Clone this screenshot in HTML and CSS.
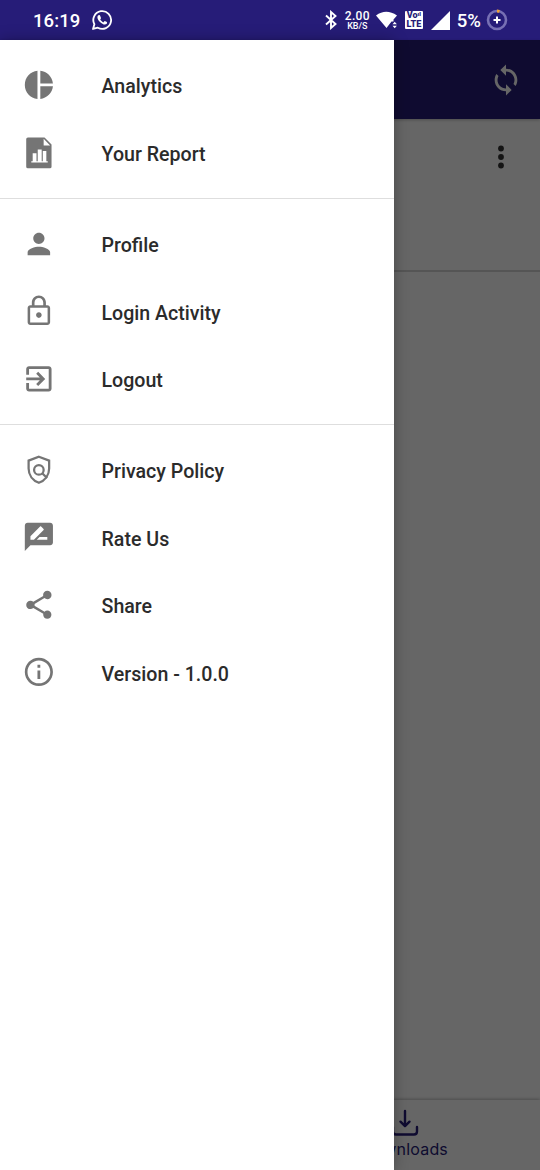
FILE: index.html
```html
<!DOCTYPE html>
<html lang="en">
<head>
<meta charset="utf-8">
<title>Menu</title>
<link rel="stylesheet" href="styles.css">
</head>
<body>
<header class="status">
  <span class="clock">16:19</span>
  <svg class="wa" viewBox="0 0 24 24" width="22" height="22"><path d="M2.200 21.800l1.500-5.200A9.700 9.700 0 1 1 7.400 20.400z" fill="none" stroke="#fff" stroke-width="2" stroke-linejoin="round"/><path d="M8.700 6.600c-.4 0-1.700.8-1.700 2.400 0 3.300 4.900 8 8.100 8 1.500 0 2.500-1 2.500-2.200 0-.5-2.300-1.600-2.700-1.600-.4 0-1 1.400-1.400 1.400-.7 0-3.500-2.400-3.500-3.300 0-.4.900-.8.900-1.300 0-.5-.9-2.900-1.300-3.200-.2-.2-.6-.2-.9-.2z" fill="#fff"/></svg>
  <div class="status-right">
    <svg class="bt" viewBox="0 0 14 20" width="14" height="20"><path d="M2 5.500l9.500 8.500L7 18V2l4.500 4L2 14.500" fill="none" stroke="#fff" stroke-width="1.900"/></svg>
    <div class="speed"><b>2.00</b><span>KB/S</span></div>
    <svg class="wifi" viewBox="0 0 22 18" width="22" height="18"><path d="M0 4.500Q10 -3 21 4.500L17.500 8.500V10.500H15.500L10.500 17z" fill="#fff"/><path d="M16.500 13.200l2.200-2.500 2.200 2.500zM16.500 14.700h4.400l-2.200 2.500z" fill="#fff"/></svg>
    <div class="volte"><span>Vo<i>ıl</i></span><span>LTE</span></div>
    <svg class="signal" viewBox="0 0 19 19" width="19" height="19"><path d="M19 0v19H0z" fill="#fff"/></svg>
    <span class="percent">5%</span>
    <svg class="battery" viewBox="0 0 22 22" width="22" height="22"><circle cx="11" cy="11" r="9" fill="none" stroke="#7770b4" stroke-width="2.600"/><path d="M11 2a9 9 0 0 1 2.500.4" fill="none" stroke="#f2a33a" stroke-width="2.800"/><path d="M11 7.500v7M7.500 11h7" stroke="#fff" stroke-width="2"/></svg>
  </div>
</header>
<main class="stage">
  <section class="app">
    <div class="appbar">
      <svg viewBox="0 0 24 24" width="34" height="34" fill="#fff"><path d="M12 4V1L8 5l4 4V6c3.310 0 6 2.690 6 6 0 1.010-.25 1.970-.7 2.800l1.460 1.460C19.540 15.030 20 13.570 20 12c0-4.420-3.580-8-8-8zm0 14c-3.310 0-6-2.690-6-6 0-1.010.25-1.970.7-2.800L5.240 7.740C4.460 8.970 4 10.430 4 12c0 4.420 3.580 8 8 8v3l4-4-4-4v3z"/></svg>
    </div>
    <div class="card">
      <svg viewBox="0 0 8 24" width="8" height="24" fill="#333"><circle cx="4" cy="3.500" r="2.900"/><circle cx="4" cy="12" r="2.900"/><circle cx="4" cy="20.500" r="2.900"/></svg>
    </div>
    <div class="blank"></div>
    <nav class="tabs">
      <div class="tab">
        <svg viewBox="0 0 28 28" width="28" height="28" fill="none" stroke="#261c78" stroke-width="2.400" stroke-linecap="round" stroke-linejoin="round"><path d="M14 2v15M9.500 12.700l4.500 4.500 4.500-4.500M2 18v4.500q0 3 3 3h18q3 0 3-3V18"/></svg>
        <span>Downloads</span>
      </div>
    </nav>
  </section>
  <div class="scrim"></div>
  <aside class="drawer">
    <ul class="group">
      <li class="item"><svg class="icon" viewBox="0 0 24 24"><path d="M11 2v20c-5.070-.5-9-4.790-9-10s3.930-9.500 9-10zm2.030 0v8.990H22c-.47-4.740-4.240-8.520-8.970-8.990zm0 11.010V22c4.740-.47 8.500-4.250 8.970-8.990h-8.970z"/></svg>Analytics</li>
      <li class="item"><svg class="icon" viewBox="0 0 24 24"><path d="M4.200 1h11.800L21 6v15.800a1.200 1.200 0 0 1-1.200 1.200H4.200A1.200 1.200 0 0 1 3 21.800V2.200A1.200 1.200 0 0 1 4.200 1z"/><path class="cut" d="M15.400 2v4.800H20zM6.600 18.900V18h1v-5.800h2.700V18h.9V9.600h2.800V18h.8v-7.300h2.500V18h1v.9z"/></svg>Your Report</li>
    </ul>
    <ul class="group">
      <li class="item"><svg class="icon" viewBox="0 0 24 24"><path d="M12 12c2.210 0 4-1.790 4-4s-1.790-4-4-4-4 1.790-4 4 1.790 4 4 4zm0 2c-2.670 0-8 1.340-8 4v2h16v-2c0-2.660-5.330-4-8-4z"/></svg>Profile</li>
      <li class="item"><svg class="icon" viewBox="0 0 24 24"><path d="M12 17c1.100 0 2-.9 2-2s-.9-2-2-2-2 .9-2 2 .9 2 2 2zm6-9h-1V6c0-2.760-2.240-5-5-5S7 3.240 7 6v2H6c-1.100 0-2 .9-2 2v10c0 1.100.9 2 2 2h12c1.100 0 2-.9 2-2V10c0-1.100-.9-2-2-2zM8.900 6c0-1.710 1.390-3.100 3.100-3.100s3.100 1.390 3.100 3.100v2H8.900V6zM18.200 20.200H5.800V9.800h12.400v10.400z"/></svg>Login Activity</li>
      <li class="item"><svg class="icon" viewBox="0 0 24 24"><path d="M10.090 15.590L11.500 17l5-5-5-5-1.410 1.410L12.670 11H3v2h9.670l-2.580 2.590zM19 3H5c-1.110 0-2 .9-2 2v4h2V5h14v14H5v-4H3v4c0 1.100.89 2 2 2h14c1.100 0 2-.9 2-2V5c0-1.100-.9-2-2-2z"/></svg>Logout</li>
    </ul>
    <ul class="group">
      <li class="item"><svg class="icon line" viewBox="0 0 24 24"><path d="M12 2.700l7.300 2.700v5.700c0 4.600-2.900 8.500-7.300 10.100-4.400-1.600-7.300-5.500-7.300-10.100V5.400z"/><circle cx="12" cy="12" r="3.400"/><path d="M14.400 14.400l3.400 3.400"/></svg>Privacy Policy</li>
      <li class="item"><svg class="icon" viewBox="0 0 24 24"><path d="M20 2H4c-1.100 0-1.990.9-1.990 2L2 22l4-4h14c1.100 0 2-.9 2-2V4c0-1.100-.9-2-2-2zM6 14v-2.470l6.880-6.880c.2-.2.510-.2.710 0l1.770 1.770c.2.200.2.510 0 .710L8.470 14H6zm12 0h-7.500l2-2H18v2z"/></svg>Rate Us</li>
      <li class="item"><svg class="icon" viewBox="0 0 24 24"><path d="M18 16.080c-.76 0-1.440.3-1.960.770L8.910 12.700c.05-.23.090-.46.090-.7s-.04-.47-.09-.7l7.050-4.110c.54.500 1.250.810 2.040.810 1.660 0 3-1.340 3-3s-1.340-3-3-3-3 1.340-3 3c0 .240.040.470.090.700L8.040 9.810C7.500 9.310 6.790 9 6 9c-1.660 0-3 1.340-3 3s1.340 3 3 3c.79 0 1.500-.31 2.040-.81l7.120 4.160c-.05.210-.08.430-.08.650 0 1.610 1.310 2.920 2.920 2.920 1.610 0 2.920-1.310 2.920-2.920s-1.310-2.920-2.920-2.920z"/></svg>Share</li>
      <li class="item"><svg class="icon" viewBox="0 0 24 24"><path d="M11 17h2v-6h-2v6zm1-15C6.480 2 2 6.480 2 12s4.480 10 10 10 10-4.480 10-10S17.520 2 12 2zm0 18.100c-4.470 0-8.100-3.630-8.100-8.100S7.530 3.900 12 3.900s8.100 3.630 8.100 8.100-3.630 8.100-8.100 8.100zM11 9h2V7h-2v2z"/></svg>Version - 1.0.0</li>
    </ul>
  </aside>
</main>
</body>
</html>
```
FILE: styles.css
```css
* { box-sizing: border-box; }

body {
  margin: 0;
  height: 1170px;
  display: flex;
  flex-direction: column;
  overflow: hidden;
  font-family: Roboto, "Liberation Sans", sans-serif;
  background: #fff;
}

.status {
  height: 40px;
  flex: none;
  display: flex;
  align-items: center;
  padding: 0 32px 0 33px;
  background: #261c78;
  color: #fff;
  font-weight: 500;
}

.clock { font-size: 18.5px; letter-spacing: 0.1px; padding-top: 1px; }
.wa { margin-left: 11px; }
.status-right { margin-left: auto; display: flex; align-items: center; }
.bt { margin-right: 7px; }

.speed {
  width: 25px;
  display: flex;
  flex-direction: column;
  align-items: center;
  font-size: 9px;
  line-height: 8px;
  margin-right: 6px;
}
.speed b { font-size: 12px; line-height: 11px; font-weight: 500; letter-spacing: 0.3px; }

.wifi { margin-right: 7px; }

.volte {
  width: 18px;
  height: 18px;
  border-radius: 1px;
  background: #fff;
  color: #261c78;
  display: flex;
  flex-direction: column;
  align-items: center;
  font-size: 9px;
  line-height: 9px;
  font-weight: 900;
  margin-right: 8px;
}
.volte i { font-size: 6px; font-style: normal; vertical-align: 2px; line-height: 0; }

.signal { margin-right: 7px; }
.percent { font-size: 18.5px; margin-right: 5px; padding-top: 1px; }

.stage { flex: 1; position: relative; display: flex; }
.app { flex: 1; display: flex; flex-direction: column; }

.appbar {
  height: 79px;
  display: flex;
  align-items: center;
  justify-content: flex-end;
  padding-right: 17px;
  background: #261c78;
  box-shadow: 0 1px 3px rgba(0, 0, 0, 0.25);
}

.card {
  height: 153px;
  display: flex;
  justify-content: flex-end;
  align-items: flex-start;
  padding: 26px 35.5px 0 0;
  border-bottom: 2px solid #d4d4d4;
}

.blank { flex: 1; }

.tabs {
  height: 70px;
  display: flex;
  justify-content: center;
  padding-left: 270px;
  box-shadow: 0 -1px 3px rgba(0, 0, 0, 0.25);
}
.tab {
  width: 270px;
  display: flex;
  flex-direction: column;
  align-items: center;
  padding-top: 9px;
  font-family: Inter, Roboto, sans-serif;
  font-size: 16px;
  line-height: 22px;
  letter-spacing: 0.2px;
  color: #261c78;
}
.tab span { margin-top: 1px; }

.scrim { position: absolute; inset: 0; background: rgba(0, 0, 0, 0.6); }

.drawer {
  position: absolute;
  inset: 0 auto 0 0;
  width: 394px;
  padding-top: 1px;
  background: #fff;
  box-shadow: 0 0 14px rgba(0, 0, 0, 0.3);
}

.group { list-style: none; margin: 0; padding: 12.2px 0 9.8px; }
.group + .group { padding-top: 12.8px; border-top: 1.4px solid #dedede; }

.item {
  height: 67.5px;
  display: flex;
  align-items: center;
  padding-left: 22.2px;
  font-size: 19.6px;
  font-weight: 500;
  color: #2b2b2b;
}

.icon { width: 33.75px; height: 33.75px; margin: -4px 45.6px 0 0; fill: #757575; }
.icon .cut { fill: #fff; }
.icon.line { fill: none; stroke: #757575; stroke-width: 1.6; }
```
